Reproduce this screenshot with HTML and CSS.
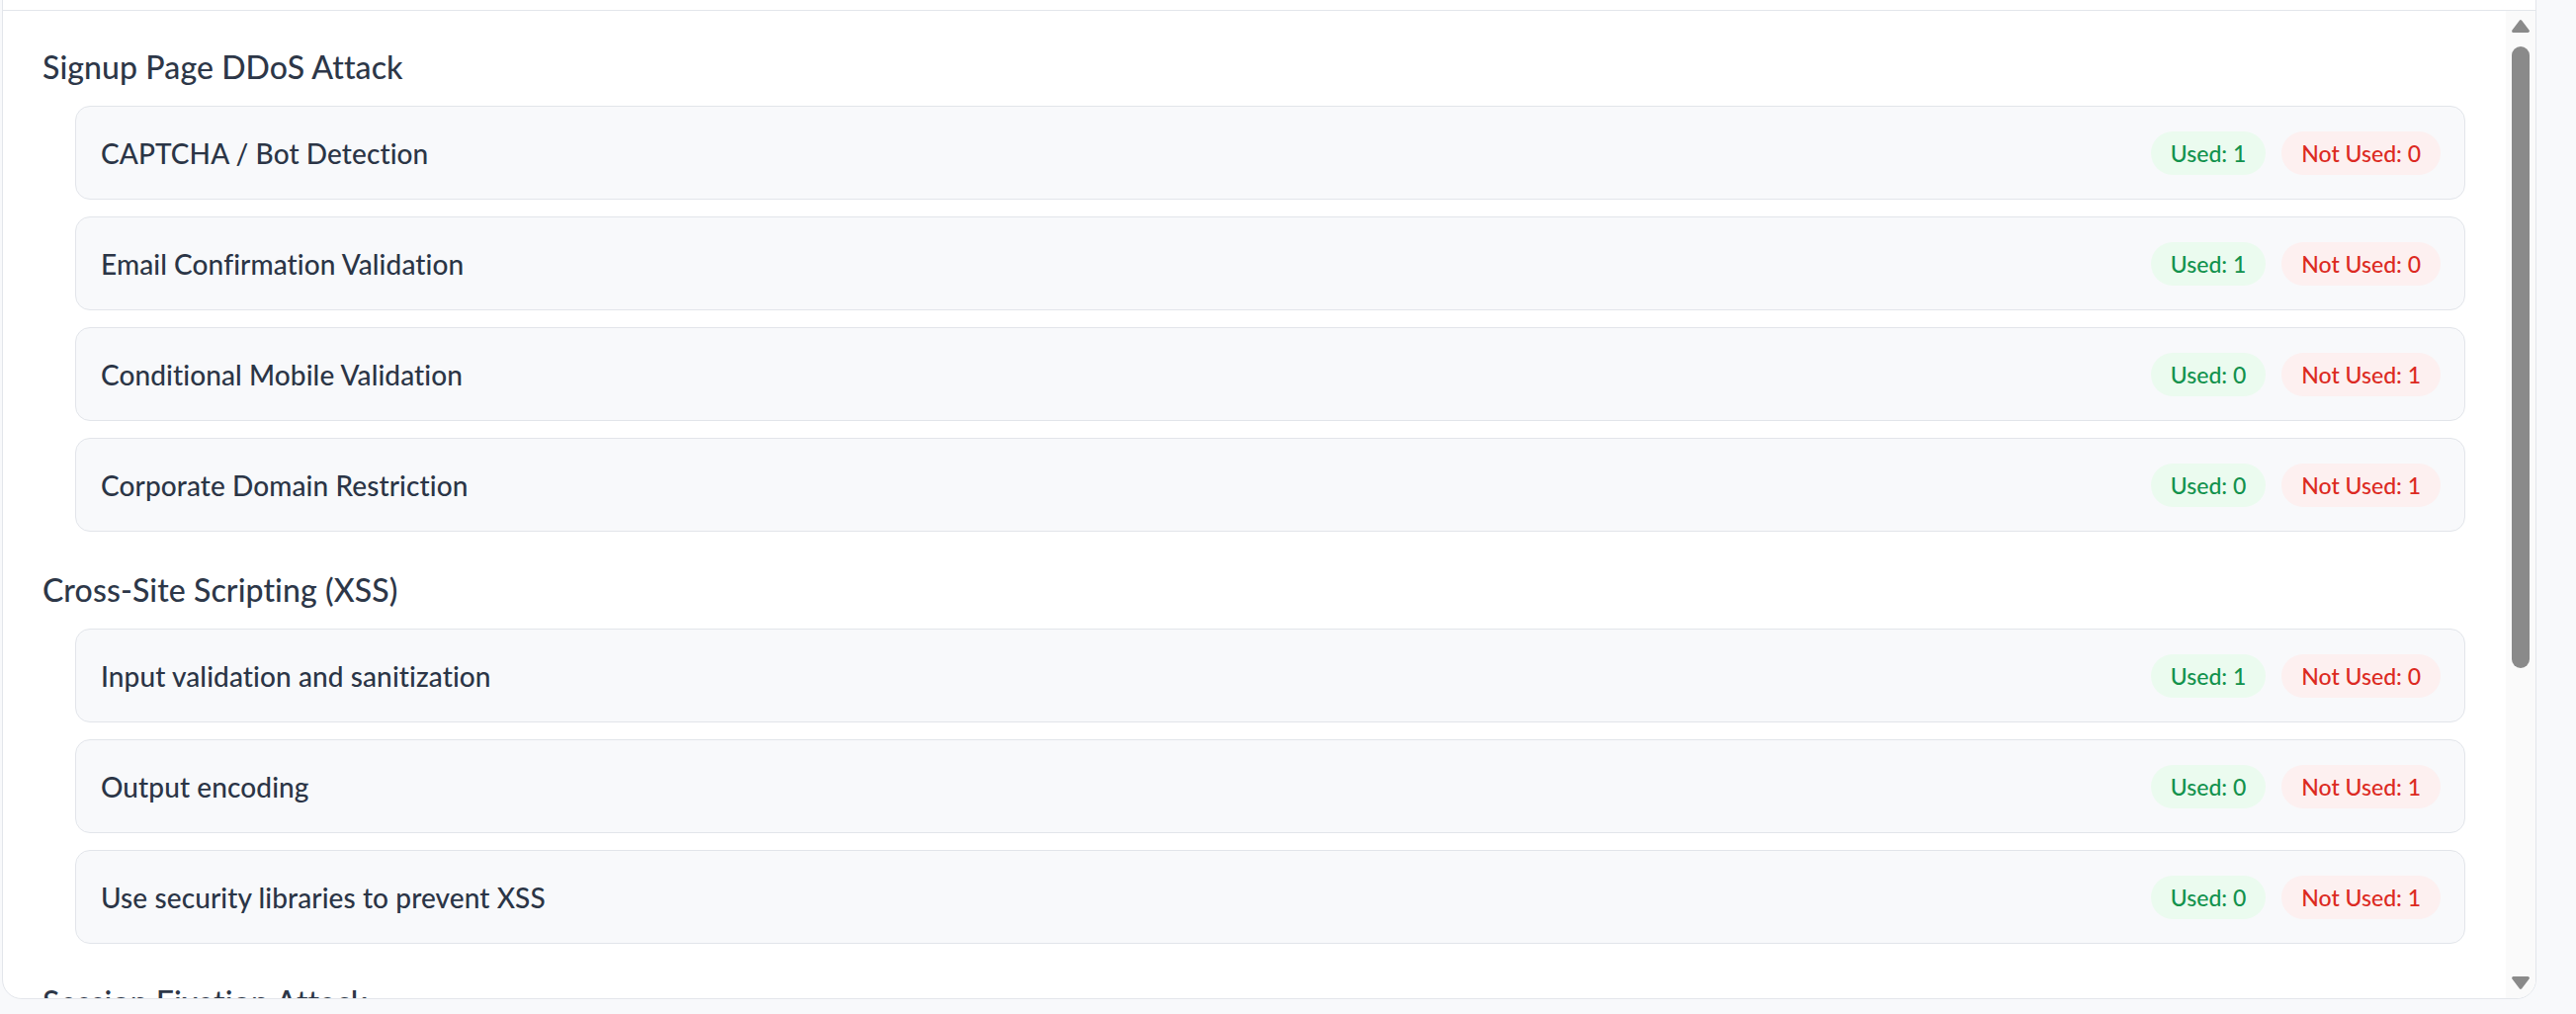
FILE: index.html
```html
<!DOCTYPE html>
<html lang="en">
<head>
<meta charset="utf-8">
<title>Security Controls</title>
<link rel="stylesheet" href="styles.css">
</head>
<body>
<div class="page">
  <div class="panel">
    <div class="panel-head"></div>
    <div class="panel-body">
      <div class="scroll-content">
        <section class="section">
          <h3 class="section-title">Signup Page DDoS Attack</h3>
          <div class="items">
            <div class="item"><span class="item-name">CAPTCHA / Bot Detection</span><div class="badges"><span class="badge used">Used: 1</span><span class="badge not-used">Not Used: 0</span></div></div>
            <div class="item"><span class="item-name">Email Confirmation Validation</span><div class="badges"><span class="badge used">Used: 1</span><span class="badge not-used">Not Used: 0</span></div></div>
            <div class="item"><span class="item-name">Conditional Mobile Validation</span><div class="badges"><span class="badge used">Used: 0</span><span class="badge not-used">Not Used: 1</span></div></div>
            <div class="item"><span class="item-name">Corporate Domain Restriction</span><div class="badges"><span class="badge used">Used: 0</span><span class="badge not-used">Not Used: 1</span></div></div>
          </div>
        </section>
        <section class="section">
          <h3 class="section-title">Cross-Site Scripting (XSS)</h3>
          <div class="items">
            <div class="item"><span class="item-name">Input validation and sanitization</span><div class="badges"><span class="badge used">Used: 1</span><span class="badge not-used">Not Used: 0</span></div></div>
            <div class="item"><span class="item-name">Output encoding</span><div class="badges"><span class="badge used">Used: 0</span><span class="badge not-used">Not Used: 1</span></div></div>
            <div class="item"><span class="item-name">Use security libraries to prevent XSS</span><div class="badges"><span class="badge used">Used: 0</span><span class="badge not-used">Not Used: 1</span></div></div>
          </div>
        </section>
        <section class="section">
          <h3 class="section-title">Session Fixation Attack</h3>
          <div class="items">
            <div class="item"><span class="item-name">Regenerate session ID after login</span><div class="badges"><span class="badge used">Used: 1</span><span class="badge not-used">Not Used: 0</span></div></div>
          </div>
        </section>
      </div>
      <div class="scrollbar">
        <svg class="sb-arrow" width="18" height="13" viewBox="0 0 18 13"><path d="M9 1.6 L16.4 11.4 L1.6 11.4 Z" fill="#8a8a8a" stroke="#8a8a8a" stroke-width="3" stroke-linejoin="round"/></svg>
        <div class="sb-thumb"></div>
        <svg class="sb-arrow sb-down" width="18" height="13" viewBox="0 0 18 13"><path d="M9 11.4 L16.4 1.6 L1.6 1.6 Z" fill="#8a8a8a" stroke="#8a8a8a" stroke-width="3" stroke-linejoin="round"/></svg>
      </div>
    </div>
  </div>
</div>
</body>
</html>
```

FILE: styles.css
```css
html, body {
  margin: 0;
  padding: 0;
}

body {
  background: #f8f9fb;
  font-family: "Lato", "Inter", sans-serif;
  color: #2d3748;
  overflow: hidden;
}

.page {
  padding: 0 40px 0 2px;
}

.panel {
  box-sizing: border-box;
  height: 1031px;
  margin-top: -20px;
  background: #ffffff;
  border: 1px solid #e3e6eb;
  border-radius: 20px;
  display: flex;
  flex-direction: column;
  overflow: hidden;
}

.panel-head {
  flex: none;
  height: 29px;
  border-bottom: 1px solid #e3e6eb;
}

.panel-body {
  flex: 1;
  min-height: 0;
  display: flex;
}

.scroll-content {
  flex: 1;
  min-width: 0;
  overflow: hidden;
  padding: 37px 41px 0 40px;
}

.section + .section {
  margin-top: 39px;
}

.section-title {
  margin: 0 0 19px;
  font-size: 32px;
  line-height: 40px;
  font-weight: 500;
  letter-spacing: 0.1px;
  color: #2d3748;
}

.items {
  display: flex;
  flex-direction: column;
  gap: 17px;
  margin-left: 33px;
}

.item {
  box-sizing: border-box;
  height: 95px;
  display: flex;
  align-items: center;
  justify-content: space-between;
  background: #f8f9fb;
  border: 1px solid #e2e5ea;
  border-radius: 15px;
  padding: 0 24px 0 25px;
}

.item-name {
  font-size: 28px;
  font-weight: 500;
  letter-spacing: 0.1px;
  color: #2b3546;
}

.badges {
  display: flex;
  gap: 16px;
}

.badge {
  height: 44px;
  border-radius: 22px;
  padding: 0 20px;
  display: flex;
  align-items: center;
  font-size: 23px;
  font-weight: 500;
}

.used {
  background: #ebfbef;
  color: #12924d;
}

.not-used {
  background: #fdf0f0;
  color: #dc2a22;
}

.scrollbar {
  flex: none;
  width: 30px;
  background: #fafafa;
  display: flex;
  flex-direction: column;
  align-items: center;
  padding: 9px 0;
  box-sizing: border-box;
}

.sb-arrow {
  display: block;
  flex: none;
}

.sb-thumb {
  flex: none;
  width: 18px;
  height: 629px;
  margin-top: 14px;
  border-radius: 9px;
  background: #8a8a8a;
}

.sb-down {
  margin-top: auto;
}
```
